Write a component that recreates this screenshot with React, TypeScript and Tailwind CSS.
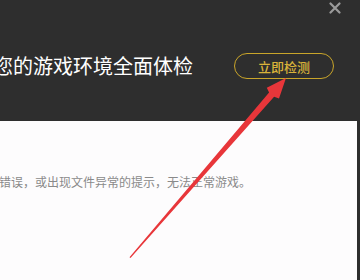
import React from "react";

export default function App() {
  const font = { fontFamily: '"Noto Sans CJK SC", "Noto Sans", sans-serif' };
  return (
    <div
      className="relative w-[360px] h-[280px] overflow-hidden bg-[#2e2e2e] flex flex-col"
      style={font}
    >
      <div className="h-[121px] flex flex-col">
        <div className="h-[16px] flex justify-end pr-[19px] pt-[2px]">
          <svg width="12" height="12" viewBox="0 0 12 12">
            <path d="M1.5 1.5 L10.5 10.5 M10.5 1.5 L1.5 10.5" stroke="#9a9a9a" strokeWidth="2.2" strokeLinecap="round" />
          </svg>
        </div>
        <div className="mt-[37px] flex items-center">
          <div className="ml-[-7px] text-[20px] leading-[26px] text-white whitespace-nowrap w-[241px]">
            您的游戏环境全面体检
          </div>
          <div className="w-[100px] h-[26px] rounded-full border border-[#c9a52a] flex items-center justify-center text-[#d9b33a] text-[13px] font-medium leading-none">
            立即检测
          </div>
        </div>
      </div>
      <div className="flex-1 flex">
        <div className="flex-1 bg-[#fdfcfd] pt-[52px]">
          <div className="ml-[-1px] text-[12px] leading-[18px] text-[#8a8a8a] whitespace-nowrap">
            错误，或出现文件异常的提示，无法正常游戏。
          </div>
        </div>
        <div className="w-[3px] bg-[#2e2e2e]" />
      </div>
      <svg className="absolute inset-0 pointer-events-none" width="360" height="280" viewBox="0 0 360 280">
        <polygon
          points="129.5,257.2 269.1,92.4 266.8,87.8 286,78 279,98.4 274.1,96.8 130.5,257.9"
          fill="#e8363a"
        />
      </svg>
    </div>
  );
}
